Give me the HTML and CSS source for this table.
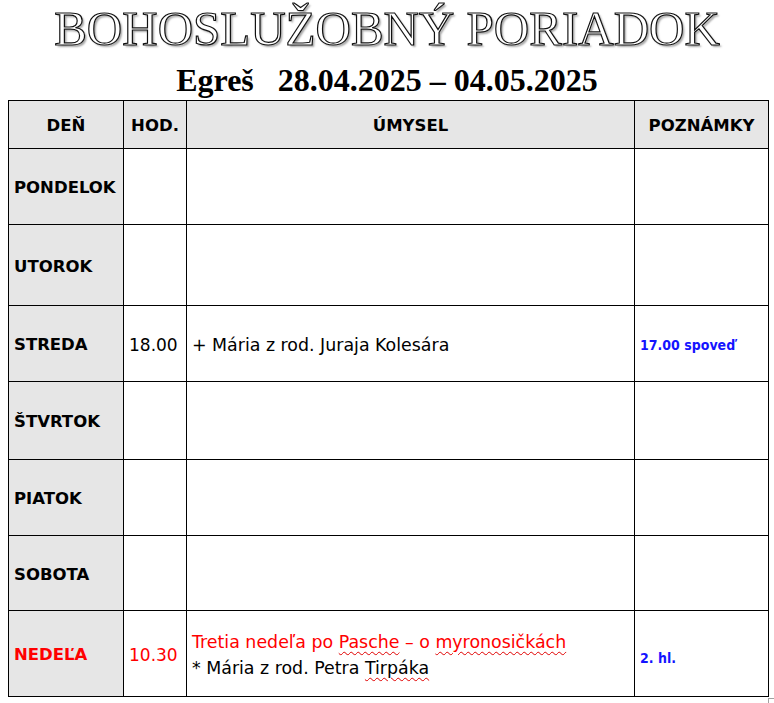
FILE: index.html
```html
<!DOCTYPE html>
<html lang="sk">
<head>
<meta charset="utf-8">
<title>Bohoslužobný poriadok</title>
<link rel="stylesheet" href="styles.css">
</head>
<body>
<h1 class="title">BOHOSLUŽOBNÝ PORIADOK</h1>
<h2 class="subtitle">Egreš&nbsp;&nbsp;&nbsp;28.04.2025 – 04.05.2025</h2>
<table class="schedule">
  <colgroup>
    <col class="c-day">
    <col class="c-hour">
    <col class="c-intent">
    <col class="c-note">
  </colgroup>
  <tr class="head">
    <th>DEŇ</th>
    <th>HOD.</th>
    <th>ÚMYSEL</th>
    <th>POZNÁMKY</th>
  </tr>
  <tr class="r1">
    <td class="day">PONDELOK</td><td></td><td></td><td></td>
  </tr>
  <tr class="r2">
    <td class="day">UTOROK</td><td></td><td></td><td></td>
  </tr>
  <tr class="r3">
    <td class="day">STREDA</td><td class="hour">18.00</td><td class="intent">+ Mária z rod. Juraja Kolesára</td><td class="note">17.00 spoveď</td>
  </tr>
  <tr class="r4">
    <td class="day">ŠTVRTOK</td><td></td><td></td><td></td>
  </tr>
  <tr class="r5">
    <td class="day">PIATOK</td><td></td><td></td><td></td>
  </tr>
  <tr class="r6">
    <td class="day">SOBOTA</td><td></td><td></td><td></td>
  </tr>
  <tr class="r7">
    <td class="day red">NEDEĽA</td>
    <td class="hour red">10.30</td>
    <td class="intent">
      <div class="line red">Tretia nedeľa po <span class="spell">Pasche</span> – o <span class="spell">myronosičkách</span></div>
      <div class="line">* Mária z rod. Petra <span class="spell">Tirpáka</span></div>
    </td>
    <td class="note low">2. hl.</td>
  </tr>
</table>
<div class="corner"></div>
</body>
</html>
```
FILE: styles.css
```css
html, body {
  margin: 0;
  padding: 0;
  background: #fff;
}

.title {
  margin: 0;
  padding-top: 2px;
  font-family: "Liberation Serif", serif;
  font-weight: normal;
  font-size: 49px;
  line-height: 54px;
  text-align: center;
  color: #fff;
  -webkit-text-stroke: 1.2px #111;
  text-shadow: 2px 2px 2px rgba(0, 0, 0, 0.35);
}

.subtitle {
  margin: 6px 0 0 0;
  font-family: "Liberation Serif", serif;
  font-weight: bold;
  font-size: 32px;
  line-height: 36px;
  text-align: center;
  color: #000;
}

.schedule {
  margin: 2px 0 0 8px;
  width: 760px;
  table-layout: fixed;
  border-collapse: collapse;
  font-family: "DejaVu Sans", sans-serif;
  color: #000;
}

.c-day { width: 115px; }
.c-hour { width: 63px; }
.c-intent { width: 448px; }
.c-note { width: 134px; }

.schedule th,
.schedule td {
  border: 1px solid #000;
  padding: 2px 5px 0 5px;
  vertical-align: middle;
  text-align: left;
  white-space: nowrap;
}

.schedule th {
  background: #e6e6e6;
  font-weight: bold;
  font-size: 16.5px;
  text-align: center;
}

.head { height: 48px; }
.r1 { height: 76px; }
.r2 { height: 81px; }
.r3 { height: 76px; }
.r4 { height: 78px; }
.r5 { height: 76px; }
.r6 { height: 75px; }
.r7 { height: 86px; }

.day {
  background: #e6e6e6;
  font-weight: bold;
  font-size: 16.5px;
}

.hour {
  font-size: 17px;
}

.intent {
  font-size: 17.4px;
}

.intent .line {
  line-height: 26px;
}

.note {
  font-family: "DejaVu Sans Condensed", "DejaVu Sans", sans-serif;
  font-stretch: condensed;
  font-weight: bold;
  font-size: 14px;
  color: #1414ff;
}

.note.low {
  padding-top: 8px;
}

.red {
  color: #ff0000;
}

.spell {
  text-decoration: underline wavy #e00000;
  text-decoration-thickness: 1px;
  text-underline-offset: 3px;
}

.corner {
  margin: 1px 0 0 768px;
  width: 6px;
  height: 6px;
  border-left: 1px solid #a0a0a0;
  border-top: 1px solid #a0a0a0;
}
```
